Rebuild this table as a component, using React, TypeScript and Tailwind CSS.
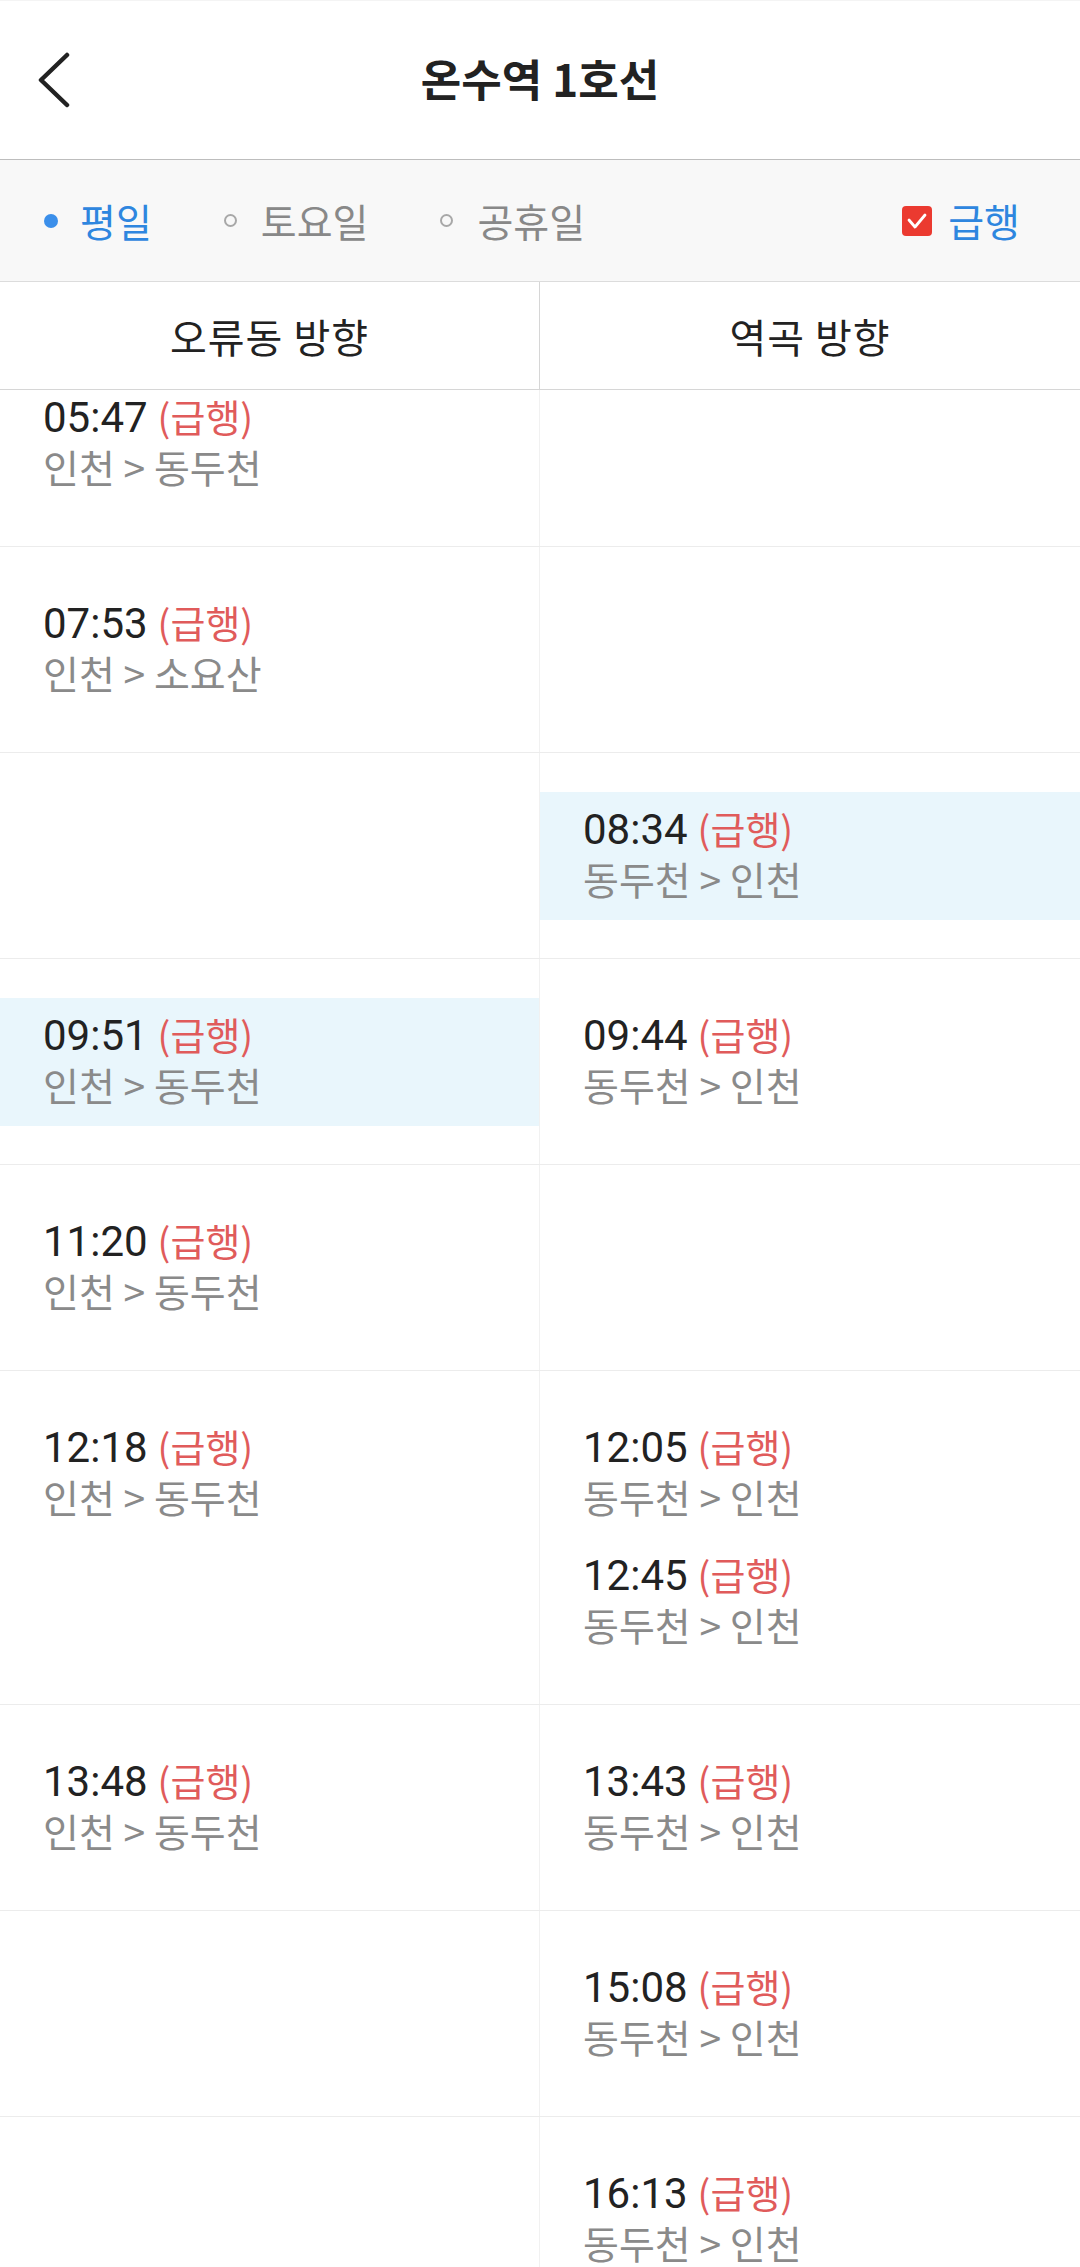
import React from "react";

interface Train {
  time: string;
  route: string;
  active?: boolean;
}

interface Row {
  left: Train[];
  right: Train[];
}

const ROWS: Row[] = [
  { left: [{ time: "05:47", route: "인천 > 동두천" }], right: [] },
  { left: [{ time: "07:53", route: "인천 > 소요산" }], right: [] },
  { left: [], right: [{ time: "08:34", route: "동두천 > 인천", active: true }] },
  {
    left: [{ time: "09:51", route: "인천 > 동두천", active: true }],
    right: [{ time: "09:44", route: "동두천 > 인천" }],
  },
  { left: [{ time: "11:20", route: "인천 > 동두천" }], right: [] },
  {
    left: [{ time: "12:18", route: "인천 > 동두천" }],
    right: [
      { time: "12:05", route: "동두천 > 인천" },
      { time: "12:45", route: "동두천 > 인천" },
    ],
  },
  {
    left: [{ time: "13:48", route: "인천 > 동두천" }],
    right: [{ time: "13:43", route: "동두천 > 인천" }],
  },
  { left: [], right: [{ time: "15:08", route: "동두천 > 인천" }] },
  { left: [], right: [{ time: "16:13", route: "동두천 > 인천" }] },
];

const FONT = "font-['Noto_Sans_CJK_KR','Noto_Sans',sans-serif]";

function TrainCell({ trains, divider }: { trains: Train[]; divider?: boolean }) {
  return (
    <div className={`pt-[39px] pb-[38px] ${divider ? "border-r border-[#f1f1f1]" : ""}`}>
      {trains.map((t) => (
        <div
          key={t.time}
          className={`h-[128px] pt-[11px] pl-[43px] ${t.active ? "bg-[#e9f6fc]" : ""}`}
        >
          <div className="flex items-baseline leading-[50px]">
            <span className="font-['Roboto','Noto_Sans_CJK_KR',sans-serif] text-[42px] text-[#222]">
              {t.time}
            </span>
            <span className="ml-[10px] text-[38px] text-[#e05b5b]">(급행)</span>
          </div>
          <div className="text-[39px] leading-[47px] text-[#8a8a8a]">{t.route}</div>
        </div>
      ))}
    </div>
  );
}

export default function App() {
  return (
    <div className={`flex h-[2267px] w-[1080px] flex-col overflow-hidden bg-white ${FONT}`}>
      {/* Top bar */}
      <header className="grid h-[160px] shrink-0 grid-cols-[1fr_auto_1fr] items-center border-t border-b border-t-[#f4f4f4] border-b-[#bdbdbd]">
        <div className="pl-[38px]">
          <svg width="32" height="56" viewBox="0 0 32 56" fill="none" aria-label="뒤로">
            <polyline
              points="29,3 3,28 29,53"
              stroke="#222"
              strokeWidth="4.5"
              strokeLinecap="round"
              strokeLinejoin="round"
            />
          </svg>
        </div>
        <h1 className="-mt-[4px] text-[44px] font-bold text-[#222]">온수역 1호선</h1>
        <div />
      </header>

      {/* Day filter */}
      <div className="flex h-[122px] shrink-0 items-center border-b border-[#dcdcdc] bg-[#f8f8f8] pl-[44px] pr-[60px] text-[39px]">
        <div className="flex items-center">
          <span className="h-[14px] w-[14px] rounded-full bg-[#3b8fea]" />
          <span className="ml-[22px] text-[#2e86df]">평일</span>
        </div>
        <div className="ml-[72px] flex items-center">
          <span className="h-[13px] w-[13px] rounded-full border-2 border-[#a8a8a8]" />
          <span className="ml-[24px] text-[#888]">토요일</span>
        </div>
        <div className="ml-[72px] flex items-center">
          <span className="h-[13px] w-[13px] rounded-full border-2 border-[#a8a8a8]" />
          <span className="ml-[24px] text-[#888]">공휴일</span>
        </div>
        <div className="ml-auto flex items-center">
          <span className="flex h-[30px] w-[30px] items-center justify-center rounded-[4px] bg-[#eb3a30]">
            <svg width="24" height="20" viewBox="0 0 24 20" fill="none">
              <polyline
                points="4,9 10,16 20,4"
                stroke="#fff"
                strokeWidth="2.8"
                strokeLinecap="round"
                strokeLinejoin="round"
              />
            </svg>
          </span>
          <span className="ml-[16px] text-[#2e86df]">급행</span>
        </div>
      </div>

      {/* Direction headers */}
      <div className="grid h-[108px] shrink-0 grid-cols-2 border-b border-[#d6d6d6] text-[40px] tracking-[1px] text-[#222]">
        <div className="flex items-center justify-center border-r border-[#d6d6d6]">오류동 방향</div>
        <div className="flex items-center justify-center">역곡 방향</div>
      </div>

      {/* Timetable (scrolled) */}
      <div className="flex-1 overflow-hidden">
        <div className="-mt-[49px]">
          {ROWS.map((row, i) => (
            <div key={i} className="grid min-h-[206px] grid-cols-2 border-b border-[#ececec]">
              <TrainCell trains={row.left} divider />
              <TrainCell trains={row.right} />
            </div>
          ))}
        </div>
      </div>
    </div>
  );
}
